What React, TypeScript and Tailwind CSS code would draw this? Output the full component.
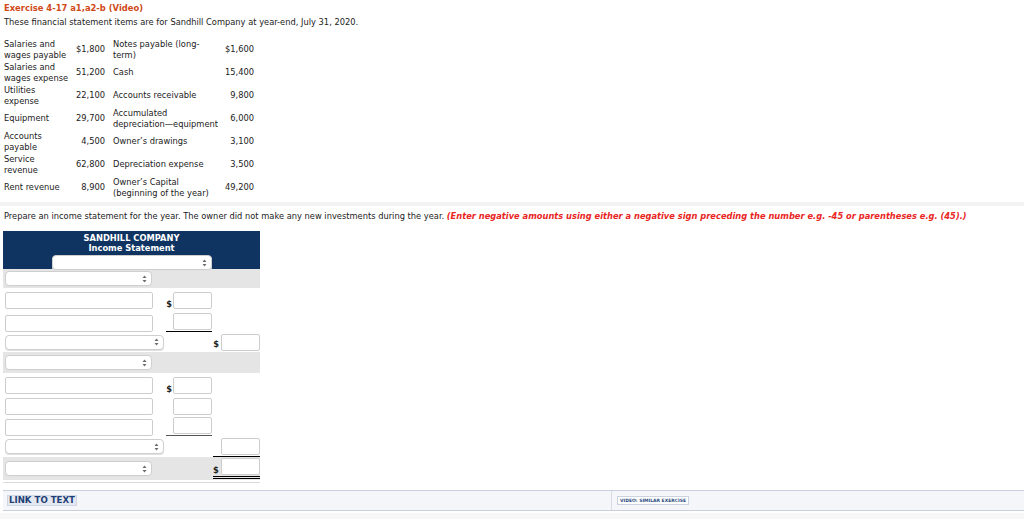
const items: [string[], string, string[], string][] = [
  [['Salaries and', 'wages payable'], '$1,800', ['Notes payable (long-', 'term)'], '$1,600'],
  [['Salaries and', 'wages expense'], '51,200', ['Cash'], '15,400'],
  [['Utilities', 'expense'], '22,100', ['Accounts receivable'], '9,800'],
  [['Equipment'], '29,700', ['Accumulated', 'depreciation\u2014equipment'], '6,000'],
  [['Accounts', 'payable'], '4,500', ['Owner\u2019s drawings'], '3,100'],
  [['Service', 'revenue'], '62,800', ['Depreciation expense'], '3,500'],
  [['Rent revenue'], '8,900', ['Owner\u2019s Capital', '(beginning of the year)'], '49,200'],
];

function Arrows() {
  return (
    <svg width="5" height="8" viewBox="0 0 5 8" className="text-[#6b6b6b]">
      <path d="M2.5 0.5 L4.5 3 L0.5 3 Z" fill="currentColor" />
      <path d="M2.5 7.5 L4.5 5 L0.5 5 Z" fill="currentColor" />
    </svg>
  );
}

function Select({ w }: { w: string }) {
  return (
    <div className={`${w} h-[15px] bg-white border border-[#cfcfcf] rounded-[4px] flex items-center justify-end pr-[4px] shadow-[0_1px_0_#e2e2e2]`}>
      <Arrows />
    </div>
  );
}

function Box() {
  return <input className="w-[39px] h-[17px] bg-white border border-[#cdcdcd] rounded-[2px]" />;
}

function Wide() {
  return <input className="w-[148px] h-[17px] bg-white border border-[#cdcdcd] rounded-[2px]" />;
}

function Lines({ text }: { text: string[] }) {
  return (
    <>
      {text.map((t) => (
        <div key={t}>{t}</div>
      ))}
    </>
  );
}

export default function App() {
  return (
    <div className="w-[1024px] h-[519px] bg-white text-[#222] font-['DejaVu_Sans','Verdana',sans-serif] text-[8.3px] leading-[10.5px] overflow-hidden">
      <div className="h-[16px] leading-[16px] px-[4px] text-[8.4px] font-bold text-[#cf4a19]">Exercise 4-17 a1,a2-b (Video)</div>
      <div className="h-[12px] leading-[12px] px-[4px] whitespace-nowrap">
        These financial statement items are for Sandhill Company at year-end, July 31, 2020.
      </div>

      <div className="pt-[10px] pl-[4px]">
        {items.map(([a, b, c, d]) => (
          <div key={b} className="flex items-center h-[23px] whitespace-nowrap">
            <div className="w-[66px]">
              <Lines text={a} />
            </div>
            <div className="w-[35px] text-right">{b}</div>
            <div className="w-[110px] pl-[8px]">
              <Lines text={c} />
            </div>
            <div className="w-[39px] text-right">{d}</div>
          </div>
        ))}
      </div>

      <div className="mt-[3px] h-[4px] bg-[#f3f3f3]" />

      <div className="mt-[4px] h-[12px] leading-[12px] px-[4px] whitespace-nowrap">
        Prepare an income statement for the year. The owner did not make any new investments during the year.{' '}
        <span className="font-bold italic text-[#e8261f]">
          (Enter negative amounts using either a negative sign preceding the number e.g. -45 or parentheses e.g. (45).)
        </span>
      </div>

      <div className="mt-[9px] ml-[3px] w-[257px] border-b border-[#dcdcdc] pb-[2px]">
        <div className="h-[38px] bg-[#0f3462] text-white font-bold text-center leading-[10px] pt-[2px]">
          <div>SANDHILL COMPANY</div>
          <div>Income Statement</div>
          <div className="flex justify-center pt-[2px]">
            <Select w="w-[160px]" />
          </div>
        </div>

        <div className="h-[19px] bg-[#e5e5e5] flex items-center pl-[2px]">
          <Select w="w-[147px]" />
        </div>
        <div className="h-[21px] flex items-end pl-[2px]">
          <Wide />
          <div className="w-[20px] text-right pr-[1px] font-bold">$</div>
          <Box />
        </div>
        <div className="h-[23px] flex items-end pl-[2px]">
          <Wide />
          <div className="ml-[13px] w-[46px] border-b border-black pb-[1px] flex justify-end">
            <Box />
          </div>
        </div>
        <div className="h-[20px] flex items-center pl-[2px]">
          <Select w="w-[159px]" />
          <div className="w-[57px] text-right pr-[2px] pt-[4px] font-bold">$</div>
          <Box />
        </div>
        <div className="h-[21px] bg-[#e5e5e5] flex items-center pl-[2px]">
          <Select w="w-[147px]" />
        </div>
        <div className="h-[21px] flex items-end pl-[2px]">
          <Wide />
          <div className="w-[20px] text-right pr-[1px] font-bold">$</div>
          <Box />
        </div>
        <div className="h-[21px] flex items-end pl-[2px]">
          <Wide />
          <div className="w-[20px]" />
          <Box />
        </div>
        <div className="h-[21px] flex items-end pl-[2px]">
          <Wide />
          <div className="ml-[13px] w-[46px] border-b border-[#555] pb-[1px] flex justify-end">
            <Box />
          </div>
        </div>
        <div className="h-[21px] flex items-end pl-[2px]">
          <div className="pb-[3px]">
            <Select w="w-[159px]" />
          </div>
          <div className="ml-[49px] w-[47px] border-b border-black pb-[1px] flex justify-end">
            <Box />
          </div>
        </div>
        <div className="h-[23px] bg-[#e5e5e5] flex items-center pl-[2px]">
          <Select w="w-[147px]" />
          <div className="ml-[61px] w-[47px] border-b-[3px] border-double border-black pb-[1px] flex items-end">
            <div className="w-[8px] font-bold">$</div>
            <Box />
          </div>
        </div>
      </div>

      <div className="mt-[7px] ml-[3px] h-[21px] bg-[#f4f6f9] border-y border-[#c8d0dc] flex items-center">
        <div className="w-[608px] pl-[4px]">
          <span className="inline-block px-[1px] bg-[#e4e9f1] border border-[#d0d7e2] text-[#1f3e76] font-bold text-[8.6px] leading-[9px]">LINK TO TEXT</span>
        </div>
        <div className="h-full border-l border-[#d6dce5] pl-[5px] flex items-center">
          <span className="inline-block px-[2px] bg-white border border-[#ccd3de] text-[#2a4a80] font-bold text-[4.5px] leading-[7px]">VIDEO: SIMILAR EXERCISE</span>
        </div>
      </div>
      <div className="mt-[2px] h-[8px] bg-[#f7f7f7]" />
    </div>
  );
}
